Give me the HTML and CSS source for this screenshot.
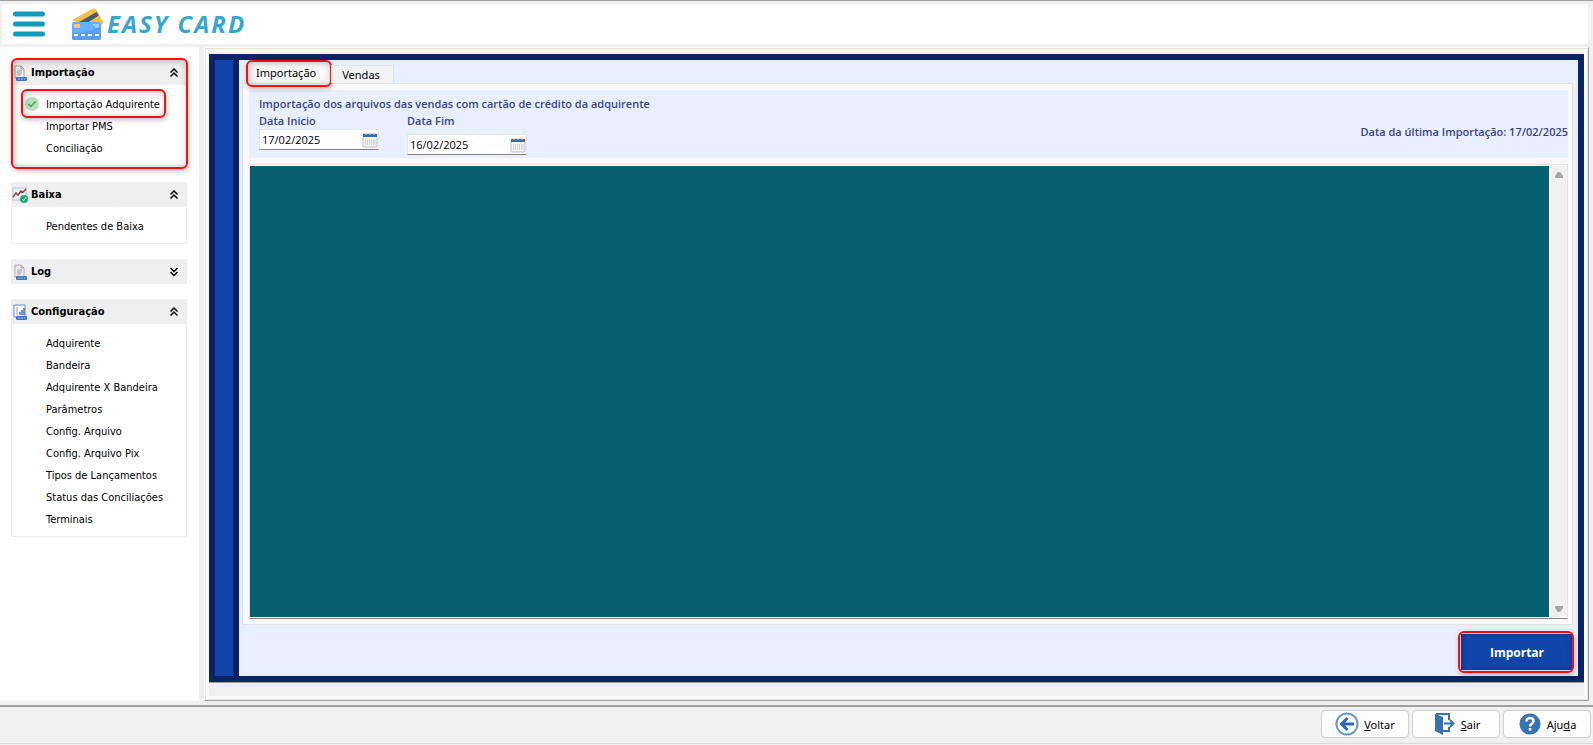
FILE: index.html
```html
<!DOCTYPE html>
<html lang="pt-BR">
<head>
    <meta charset="UTF-8">
    <meta name="viewport" content="width=device-width, initial-scale=1.0">
    <title>Easy Card - Importação</title>
    <link rel="stylesheet" href="styles.css">
</head>
<body>

<header class="topbar">
    <button class="menu-button" type="button" aria-label="Menu">
        <svg width="32" height="26" viewBox="0 0 32 26">
            <path d="M2.5 3H29.5M2.5 13H29.5M2.5 23H29.5" stroke="#109bbd" stroke-width="5" stroke-linecap="round"/>
        </svg>
    </button>
    <div class="brand">
        <svg width="34" height="32" viewBox="0 0 34 32">
            <path d="M1 12L21 1Q24 -.5 25.500 2L32 13.500Q32.500 15 31 16.500L22 22Z" fill="#f9bf45"/>
            <path d="M8 14L25.500 4L28 7.500L16 15Z" fill="#4a5a72"/>
            <rect x="1" y="14" width="29" height="18" rx="2" fill="#66b0ff"/>
            <path d="M1 25Q18 26 30 16V30Q30 32 28 32H3Q1 32 1 30Z" fill="#559ff8"/>
            <rect x="3" y="16" width="6" height="4" rx="1" fill="#f8cd62"/>
            <path d="M22 17H28M24 19H28" stroke="#d8eaff"/>
            <path d="M3 27H7M10 27H14M17 27H21M24 27H28" stroke="#fff" stroke-width="2"/>
        </svg>
        <span class="brand-name">EASY CARD</span>
    </div>
</header>

<div class="workspace">
    <nav class="sidebar">
        <section class="group highlight">
            <button class="group-head" type="button">
                <svg class="group-icon" width="16" height="16" viewBox="0 0 16 16">
                    <path d="M3 1H9L12 4V13H3Z" fill="#f4f4f4" stroke="#aaa"/>
                    <path d="M9 1V4H12M5 6H10M5 8H10M5 10H9" fill="none" stroke="#999"/>
                    <rect x="4" y="12" width="11" height="4" rx="1" fill="#4179b8"/>
                    <path d="M6 14H13" stroke="#a9c9ec" stroke-dasharray="2 1"/>
                </svg>
                <span class="group-title">Importação</span>
                <svg width="8" height="10" viewBox="0 0 8 10"><path d="M.5 4.500L4 1L7.500 4.500M.5 8.500L4 5L7.500 8.500" fill="none" stroke="#000" stroke-width="1.500"/></svg>
            </button>
            <ul class="group-items">
                <li><a href="#adquirente" class="active">
                    <svg class="item-check" width="14" height="14" viewBox="0 0 14 14"><circle cx="7" cy="7" r="7" fill="#b9dfbd"/><path d="M3.500 7L6 9.500L10.500 4.500" fill="none" stroke="#43a653" stroke-width="1.500"/></svg>
                    Importação Adquirente</a></li>
                <li><a href="#pms">Importar PMS</a></li>
                <li><a href="#conciliacao">Conciliação</a></li>
            </ul>
        </section>

        <section class="group">
            <button class="group-head" type="button">
                <svg class="group-icon" width="16" height="16" viewBox="0 0 16 16">
                    <rect x="1" y="1" width="13" height="12" fill="#eef7fc" stroke="#9ccbe2"/>
                    <path d="M1 10L4 6L6 8L9 4L11 5L14 2" fill="none" stroke="#b8343a" stroke-width="1.500"/>
                    <circle cx="12" cy="12" r="4" fill="#22a878"/>
                    <path d="M10 12L11.500 13.500L14 10.500" fill="none" stroke="#fff"/>
                </svg>
                <span class="group-title">Baixa</span>
                <svg width="8" height="10" viewBox="0 0 8 10"><path d="M.5 4.500L4 1L7.500 4.500M.5 8.500L4 5L7.500 8.500" fill="none" stroke="#000" stroke-width="1.500"/></svg>
            </button>
            <ul class="group-items">
                <li><a href="#pendentes">Pendentes de Baixa</a></li>
            </ul>
        </section>

        <section class="group">
            <button class="group-head" type="button">
                <svg class="group-icon" width="16" height="16" viewBox="0 0 16 16">
                    <path d="M3 1H9L12 4V13H3Z" fill="#f4f4f4" stroke="#aaa"/>
                    <path d="M9 1V4H12M5 6H10M5 8H10M5 10H9" fill="none" stroke="#999"/>
                    <rect x="4" y="12" width="11" height="4" rx="1" fill="#4179b8"/>
                    <path d="M6 14H13" stroke="#a9c9ec" stroke-dasharray="2 1"/>
                </svg>
                <span class="group-title">Log</span>
                <svg width="8" height="10" viewBox="0 0 8 10"><path d="M.5 1L4 4.500L7.500 1M.5 5L4 8.500L7.500 5" fill="none" stroke="#000" stroke-width="1.500"/></svg>
            </button>
        </section>

        <section class="group">
            <button class="group-head" type="button">
                <svg class="group-icon" width="16" height="16" viewBox="0 0 16 16">
                    <path d="M2 1H13V13H2Z" fill="#fff" stroke="#5b8bbf"/>
                    <path d="M4 4H6M4 6H6M4 8H6M4 10H6" stroke="#999"/>
                    <path d="M8 11V8M10 11V6M12 11V4" stroke="#3d78b8" stroke-width="1.500"/>
                    <rect x="4" y="12" width="11" height="4" rx="1" fill="#4179b8"/>
                    <path d="M6 14H13" stroke="#a9c9ec" stroke-dasharray="2 1"/>
                </svg>
                <span class="group-title">Configuração</span>
                <svg width="8" height="10" viewBox="0 0 8 10"><path d="M.5 4.500L4 1L7.500 4.500M.5 8.500L4 5L7.500 8.500" fill="none" stroke="#000" stroke-width="1.500"/></svg>
            </button>
            <ul class="group-items">
                <li><a href="#cad-adquirente">Adquirente</a></li>
                <li><a href="#bandeira">Bandeira</a></li>
                <li><a href="#adquirente-bandeira">Adquirente X Bandeira</a></li>
                <li><a href="#parametros">Parâmetros</a></li>
                <li><a href="#arquivo">Config. Arquivo</a></li>
                <li><a href="#arquivo-pix">Config. Arquivo Pix</a></li>
                <li><a href="#lancamentos">Tipos de Lançamentos</a></li>
                <li><a href="#status">Status das Conciliações</a></li>
                <li><a href="#terminais">Terminais</a></li>
            </ul>
        </section>
    </nav>

    <main class="frame">
        <div class="window">
            <div class="rail"></div>
            <div class="content">
                <div class="tabs" role="tablist">
                    <button class="tab selected" type="button" role="tab" aria-selected="true">Importação</button>
                    <button class="tab" type="button" role="tab" aria-selected="false">Vendas</button>
                </div>
                <div class="tab-page" role="tabpanel">
                    <form class="filters">
                        <h1 class="filters-title">Importação dos arquivos das vendas com cartão de crédito da adquirente</h1>
                        <div class="filters-row">
                            <div class="field">
                                <label for="data-inicio">Data Inicio</label>
                                <div class="date-box">
                                    <input id="data-inicio" type="text" value="17/02/2025">
                                    <button type="button" aria-label="Abrir calendário">
                                        <svg width="16" height="16" viewBox="0 0 16 16"><rect x="1" y="2" width="14" height="13" rx="1" fill="#f3f3f3" stroke="#bdbdbd"/><path d="M1 3.500H15" stroke="#2f6fb0" stroke-width="3"/><path d="M4 1V3M8 1V3M12 1V3" stroke="#ccd9e6"/><path d="M3.500 7V13M5.500 7V13M7.500 7V13M9.500 7V13M11.500 7V13M13 7V13" stroke="#d3d3d3"/></svg>
                                    </button>
                                </div>
                            </div>
                            <div class="field field-end">
                                <label for="data-fim">Data Fim</label>
                                <div class="date-box">
                                    <input id="data-fim" type="text" value="16/02/2025">
                                    <button type="button" aria-label="Abrir calendário">
                                        <svg width="16" height="16" viewBox="0 0 16 16"><rect x="1" y="2" width="14" height="13" rx="1" fill="#f3f3f3" stroke="#bdbdbd"/><path d="M1 3.500H15" stroke="#2f6fb0" stroke-width="3"/><path d="M4 1V3M8 1V3M12 1V3" stroke="#ccd9e6"/><path d="M3.500 7V13M5.500 7V13M7.500 7V13M9.500 7V13M11.500 7V13M13 7V13" stroke="#d3d3d3"/></svg>
                                    </button>
                                </div>
                            </div>
                            <p class="last-import">Data da última Importação: 17/02/2025</p>
                        </div>
                    </form>
                    <div class="log-box">
                        <textarea class="log-text" aria-label="Log da importação" readonly></textarea>
                        <div class="scrollbar">
                            <button type="button" aria-label="Rolar para cima"><svg width="8" height="6" viewBox="0 0 8 6"><path d="M3 0H5L8 4V6H0V4Z" fill="#a3a3a3"/></svg></button>
                            <button type="button" aria-label="Rolar para baixo"><svg width="8" height="6" viewBox="0 0 8 6"><path d="M3 6H5L8 2V0H0V2Z" fill="#a3a3a3"/></svg></button>
                        </div>
                    </div>
                </div>
                <div class="actions">
                    <button class="import-button" type="button">Importar</button>
                </div>
            </div>
        </div>
    </main>
</div>

<footer class="bottombar">
    <button class="tool-button" type="button">
        <svg width="24" height="24" viewBox="0 0 24 24"><circle cx="12" cy="12" r="10.500" fill="#fff" stroke="#6d98cb" stroke-width="2"/><path d="M19 12H7M12.500 6L6.500 12L12.500 18" fill="none" stroke="#2d69ac" stroke-width="3"/></svg>
        <span><u>V</u>oltar</span>
    </button>
    <button class="tool-button" type="button">
        <svg width="24" height="24" viewBox="0 0 24 24"><path d="M3 2L11 5V23L3 19Z" fill="#3773b3"/><path d="M4 2H17V8M17 15V19H11" fill="none" stroke="#3773b3" stroke-width="2"/><path d="M12 11.500H21M18 8L21.500 11.500L18 15" fill="none" stroke="#3773b3" stroke-width="2"/></svg>
        <span><u>S</u>air</span>
    </button>
    <button class="tool-button" type="button">
        <svg width="24" height="24" viewBox="0 0 24 24"><circle cx="12" cy="12" r="10.500" fill="#3773b3"/><path d="M8.500 9.500Q8.500 6 12 6T15.500 9Q15.500 10.800 13.700 11.800Q12 12.700 12 14.500" fill="none" stroke="#fff" stroke-width="2.500"/><rect x="10.700" y="16" width="2.600" height="2.600" fill="#fff"/></svg>
        <span>Aju<u>d</u>a</span>
    </button>
</footer>

</body>
</html>
```
FILE: styles.css
```css
* {
    box-sizing: border-box;
}
body {
    margin: 0;
    min-height: 100vh;
    display: flex;
    flex-direction: column;
    border-top: 1px solid #a0a0a0;
    background-color: #f0f0f0;
    font-family: "DejaVu Sans Condensed", "DejaVu Sans", sans-serif;
    font-size: 11px;
    color: #000;
}
button {
    font: inherit;
    color: inherit;
    border: none;
    background: none;
    padding: 0;
    cursor: pointer;
}
svg {
    display: block;
    flex: none;
}

/* Cabeçalho */
.topbar {
    display: flex;
    align-items: center;
    gap: 26px;
    height: 46px;
    padding: 0 11px;
    border: solid #f0f0f0;
    border-width: 3px 5px 3px 2px;
    background-color: #fff;
}
.brand {
    display: flex;
    align-items: center;
    gap: 2px;
}
.brand-name {
    font-family: "Open Sans", "Noto Sans", sans-serif;
    font-size: 24px;
    font-weight: bold;
    font-style: italic;
    letter-spacing: 2px;
    line-height: 32px;
    color: #35a8cf;
}

/* Área de trabalho */
.workspace {
    flex: 1;
    display: flex;
    gap: 5px;
    padding-right: 4px;
}
.sidebar {
    flex: none;
    width: 199px;
    padding: 13px 12px 0 11px;
    background-color: #fff;
    display: flex;
    flex-direction: column;
    gap: 15px;
}
.group {
    position: relative;
}
.highlight {
    margin-bottom: 1px;
}
.group-head {
    display: flex;
    align-items: center;
    width: 100%;
    height: 25px;
    padding: 0 9px 0 1px;
    background-color: #efefef;
    text-align: left;
    font-weight: bold;
}
.group-icon {
    margin-right: 3px;
}
.group-title {
    flex: 1;
}
.group-items {
    margin: 0;
    padding: 9px 0 5px;
    list-style: none;
    border: 1px solid #efefef;
    border-top: none;
}
.group-items a {
    display: block;
    padding-left: 34px;
    line-height: 22px;
    color: #000;
    text-decoration: none;
    position: relative;
    white-space: nowrap;
}
.item-check {
    position: absolute;
    left: 13px;
    top: 3px;
}

/* Destaques em vermelho */
.highlight::after,
.active::after,
.tab.selected::after,
.actions::after {
    content: "";
    position: absolute;
    border: 2px solid #f01018;
    border-radius: 6px;
    box-shadow: 1px 2px 5px rgba(0, 0, 0, 0.25), inset 1px 1px 7px rgba(0, 0, 0, 0.25);
    pointer-events: none;
}
.highlight::after {
    inset: -2px -1px -3px 0;
}
.active::after {
    inset: -5px 20px -2px 9px;
}
.tab.selected::after {
    inset: -1px -1px -4px 0;
}

/* Janela principal */
.frame {
    flex: 1;
    display: flex;
    padding: 6px 4px 18px 4px;
    border: 1px solid #fff;
    border-right-color: #a0a0a0;
    border-bottom-color: #a0a0a0;
    box-shadow: inset 0 0 0 1px #e3e3e3, inset 0 0 0 4px #fafafa;
}
.window {
    flex: 1;
    display: flex;
    border: 6px solid #0a2463;
    box-shadow: 0 1px 0 #a0a0a0;
}
.rail {
    width: 24px;
    background-color: #1145aa;
    border-right: 6px solid #0a2463;
}
.content {
    flex: 1;
    display: flex;
    flex-direction: column;
    padding-left: 3px;
    background-color: #e8efff;
    font-family: "Noto Sans", "Open Sans", sans-serif;
}
.tabs {
    display: flex;
    align-items: flex-end;
    height: 23px;
    padding-left: 4px;
}
.tab {
    position: relative;
    height: 18px;
    padding: 0 13px 0 10px;
    border: 1px solid #e3e3e3;
    border-bottom: none;
    background-color: #f3f3f3;
}
.tab.selected {
    height: 22px;
    padding: 0 15px 0 10px;
    border: none;
    background-color: #f9f9f9;
}
.tab-page {
    flex: 1;
    display: flex;
    flex-direction: column;
    gap: 6px;
    margin-right: 5px;
    padding: 6px 4px 5px 6px;
    border: 1px solid #e3e3e3;
    background-color: #f9f9f9;
}
.filters {
    height: 68px;
    padding: 4px 0 0 10px;
    background-color: #e8efff;
    color: #3b4483;
    font-family: "Open Sans", "Noto Sans", sans-serif;
    font-size: 11px;
    font-weight: 600;
}
.filters-title {
    margin: 0;
    font-size: 11px;
    line-height: 19px;
    font-weight: 600;
}
.filters-row {
    display: flex;
    gap: 28px;
}
.field label {
    display: block;
    line-height: 16px;
}
.field-end .date-box {
    margin-top: 5px;
}
.date-box {
    display: flex;
    align-items: center;
    width: 120px;
    height: 21px;
    padding-left: 2px;
    background-color: #fff;
    border: 1px solid #e5e5e5;
    border-bottom-color: #868686;
}
.date-box input {
    flex: 1;
    min-width: 0;
    padding: 0;
    border: none;
    outline: none;
    background: none;
    font: 11px "Open Sans", "Noto Sans", sans-serif;
    color: #000;
}
.last-import {
    margin: 10px 0 0 auto;
    line-height: 18px;
}
.log-box {
    flex: 1;
    display: flex;
    border: 1px solid #e3e3e3;
    border-bottom-color: #868686;
    background-color: #fff;
    padding: 1px 0;
}
.log-text {
    flex: 1;
    resize: none;
    border: none;
    outline: none;
    padding: 4px;
    background-color: #065f6f;
    color: #fff;
}
.scrollbar {
    display: flex;
    flex-direction: column;
    justify-content: space-between;
    width: 17px;
    margin-left: 1px;
    background-color: #f0f0f0;
}
.scrollbar button {
    display: flex;
    align-items: center;
    justify-content: center;
    height: 17px;
}

/* Botões */
.actions {
    position: relative;
    align-self: flex-end;
    padding: 9px 5px 6px 0;
}
.actions::after {
    inset: 6px 4px 3px -3px;
}
.import-button {
    display: block;
    width: 112px;
    height: 36px;
    background-color: #1145aa;
    color: #fff;
    font-family: "Open Sans", "Noto Sans", sans-serif;
    font-size: 12px;
    font-weight: bold;
}
.bottombar {
    display: flex;
    justify-content: flex-end;
    gap: 3px;
    height: 39px;
    margin: 4px 0 1px;
    padding: 3px 2px 0;
    border-top: 2px solid #a0a0a0;
    border-bottom: 1px solid #d9d9d9;
}
.tool-button {
    display: flex;
    align-items: center;
    justify-content: center;
    gap: 5px;
    width: 88px;
    height: 28px;
    border: 1px solid #cfcfcf;
    border-radius: 4px;
    background-color: #fdfdfd;
    font-family: "Noto Sans", "Open Sans", sans-serif;
}
```
